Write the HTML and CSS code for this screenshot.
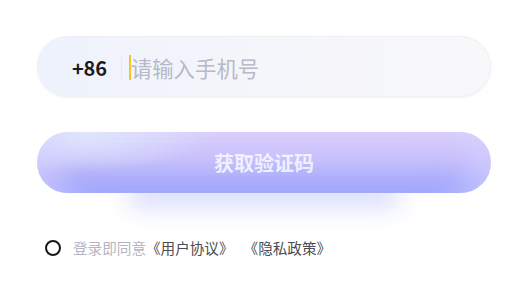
FILE: index.html
```html
<!DOCTYPE html>
<html lang="zh-CN">
<head>
  <meta charset="UTF-8">
  <meta name="viewport" content="width=device-width, initial-scale=1.0">
  <title>登录</title>
  <link rel="stylesheet" href="styles.css">
</head>
<body>
  <div class="login">
    <div class="phone">
      <span class="code">+86</span>
      <span class="sep"></span>
      <span class="caret"></span>
      <span class="hint">请输入手机号</span>
    </div>

    <button class="send">获取验证码</button>

    <div class="agree">
      <span class="radio"></span>
      <span class="tip">登录即同意</span>
      <a class="doc">《用户协议》</a>
      <a class="doc">《隐私政策》</a>
    </div>
  </div>
</body>
</html>
```

FILE: styles.css
```css
*{
  box-sizing: border-box;
  font-family: "Noto Sans CJK SC", "Noto Sans", sans-serif;
}
body{
  margin: 0;
  background: #fff;
}
.login{
  width: 454px;
  margin-left: 37px;
  padding-top: 36px;
}

.phone{
  display: flex;
  align-items: center;
  height: 61px;
  padding: 2px 0 0 34px;
  border: 1px solid #eef0f6;
  border-radius: 31px;
  background: linear-gradient(90deg, #eef2fc 0%, #f5f6fb 50%, #f8f8fa 100%);
  box-shadow: 0 1px 3px rgba(220, 224, 236, 0.4);
}
.code{
  font-size: 20px;
  font-weight: 600;
  color: #1c1c1c;
  letter-spacing: -0.2px;
}
.sep{
  width: 1px;
  height: 22px;
  margin-left: 14px;
  background: #e8e9ef;
}
.caret{
  width: 2px;
  height: 25px;
  margin-left: 7px;
  background: #f5c623;
}
.hint{
  font-size: 21.4px;
  color: #b7b9c7;
}

.send{
  position: relative;
  display: block;
  width: 100%;
  height: 61px;
  margin-top: 35px;
  border: none;
  border-radius: 31px;
  font-size: 20px;
  font-weight: 700;
  color: rgba(255, 255, 255, 0.78);
  background:
    radial-gradient(ellipse 140px 40px at 40px 0, rgba(226, 238, 253, 0.9), rgba(226, 238, 253, 0)),
    linear-gradient(180deg, #dccffc 0%, #c6c0fb 45%, #9ca3fb 100%);
  box-shadow:
    inset 34px 0 26px -14px rgba(214, 210, 255, 0.55),
    inset -34px 0 26px -14px rgba(214, 210, 255, 0.55);
}
.send::after{
  content: "";
  position: absolute;
  left: 90px;
  right: 90px;
  bottom: -14px;
  height: 24px;
  border-radius: 12px;
  background: rgba(150, 158, 250, 0.38);
  filter: blur(12px);
  z-index: -1;
}

.agree{
  display: flex;
  align-items: center;
  margin: 44px 0 0 8px;
  font-size: 14.6px;
}
.radio{
  width: 16px;
  height: 16px;
  border: 2px solid #161616;
  border-radius: 50%;
  margin-right: 12px;
}
.tip{
  color: #b3b5c2;
}
.doc{
  color: #4c4c52;
}
.doc + .doc{
  margin-left: 10px;
}
```
